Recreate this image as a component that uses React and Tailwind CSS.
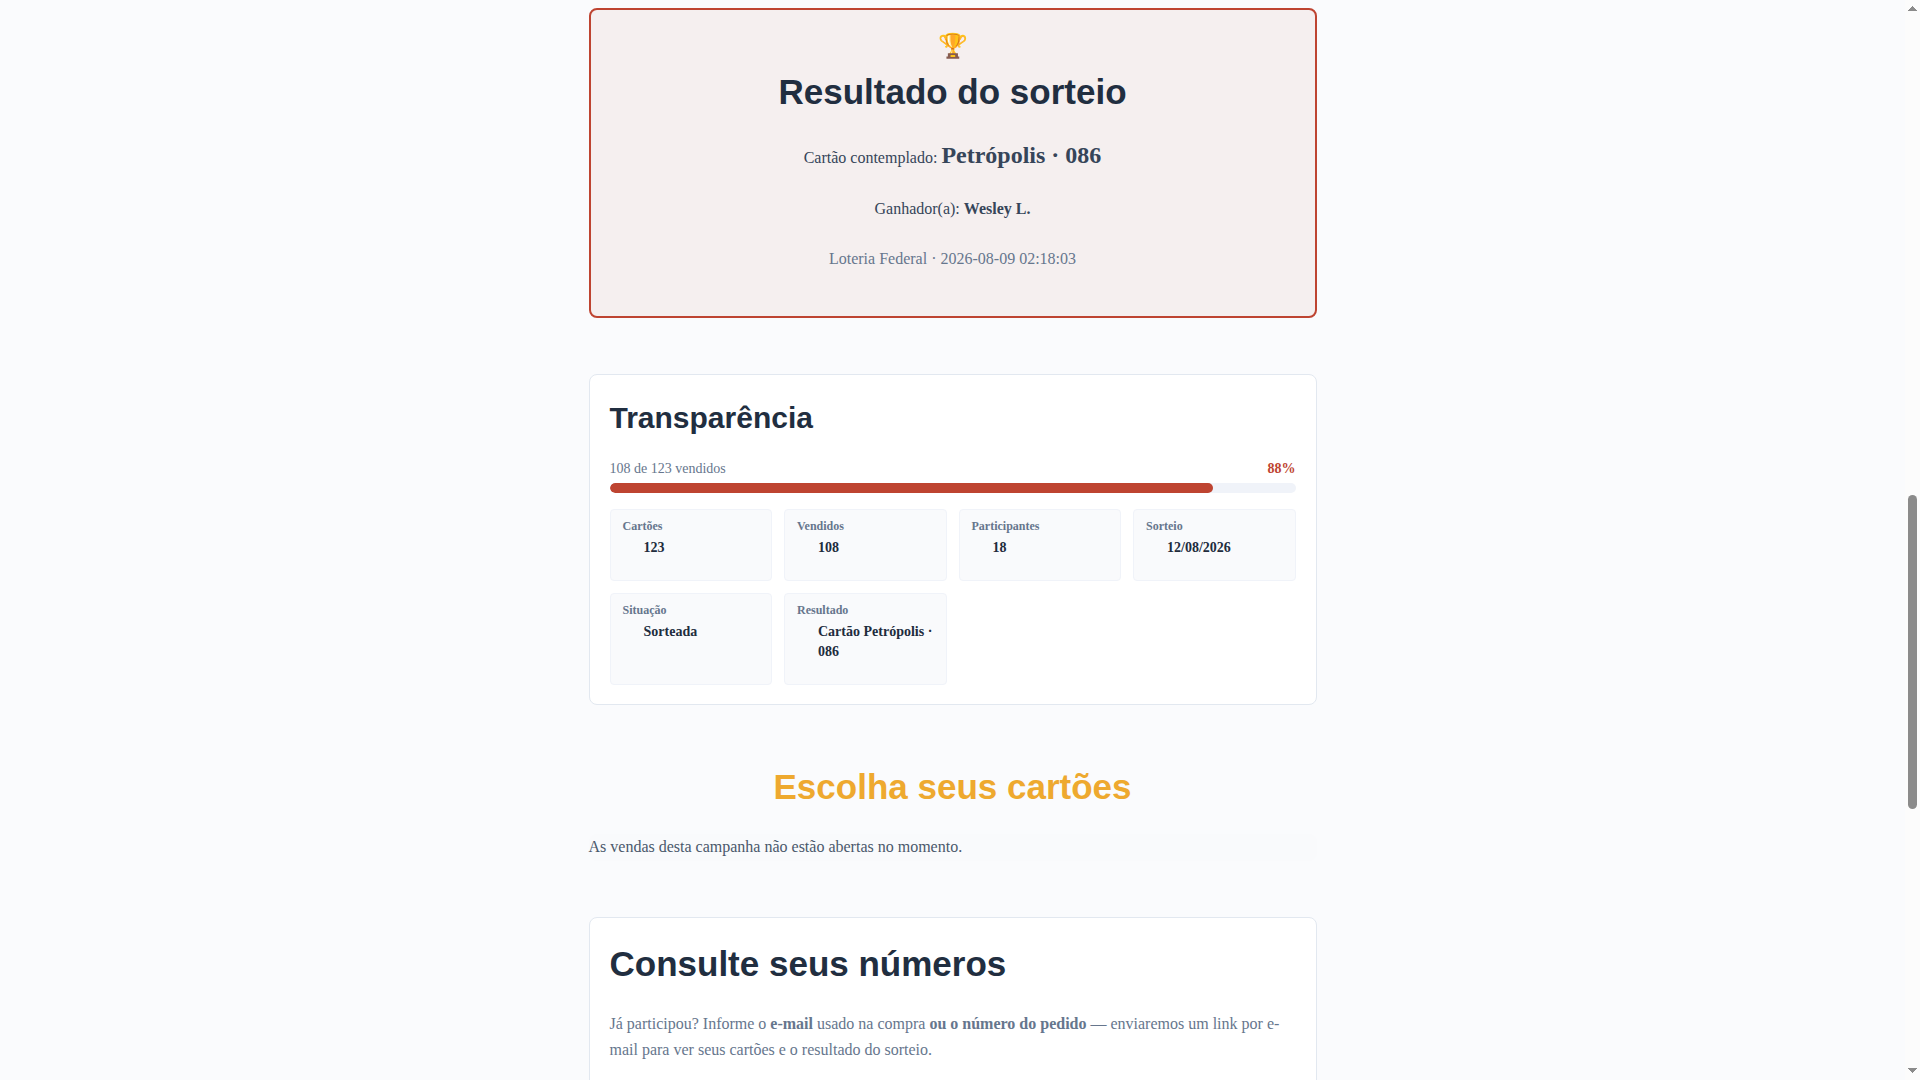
const stats = [
  { label: 'Cartões', value: '123' },
  { label: 'Vendidos', value: '108' },
  { label: 'Participantes', value: '18' },
  { label: 'Sorteio', value: '12/08/2026' },
  { label: 'Situação', value: 'Sorteada' },
  { label: 'Resultado', value: 'Cartão Petrópolis · 086' },
];

function Heading({ className, children }) {
  return (
    <h2 className={`font-['Liberation_Sans',Arial,sans-serif] font-bold ${className}`}>{children}</h2>
  );
}

function Result() {
  return (
    <section className="rounded-lg border-2 border-[#be4431] bg-[#f5efef] px-5 pt-5 pb-11 text-center text-[#364559]">
      <div className="text-2xl leading-8" aria-hidden="true">🏆</div>
      <Heading className="mt-1 text-[35px] leading-[52px] text-[#212e40]">Resultado do sorteio</Heading>
      <p className="mt-[23px] leading-[26px]">
        Cartão contemplado: <strong className="text-2xl leading-7">Petrópolis · 086</strong>
      </p>
      <p className="mt-[25px] leading-[26px]">
        Ganhador(a): <strong>Wesley L.</strong>
      </p>
      <p className="mt-6 leading-[26px] text-[#66768d]">Loteria Federal · 2026-08-09 02:18:03</p>
    </section>
  );
}

function Transparency() {
  const sold = 108;
  const total = 123;
  const percent = Math.round((sold / total) * 100);
  return (
    <section className="rounded-lg border border-[#e2e8f0] bg-white px-5 pt-5 pb-[19px]">
      <Heading className="text-3xl leading-[45px] text-[#212e40]">Transparência</Heading>
      <div className="mt-[18px] flex justify-between text-sm leading-[22px]">
        <span className="text-[#66768d]">{sold} de {total} vendidos</span>
        <strong className="text-[#be4431]">{percent}%</strong>
      </div>
      <div className="mt-[3px] h-2.5 overflow-hidden rounded-full bg-[#f0f3f9]">
        <div className="h-full rounded-full bg-[#be4431]" style={{ width: `${percent}%` }} />
      </div>
      <dl className="mt-4 grid grid-cols-2 gap-3 sm:grid-cols-4">
        {stats.map((s) => (
          <div key={s.label} className="rounded border border-[#f0f3f9] bg-[#f9fafc] px-3 pt-2 pb-[22px] font-bold">
            <dt className="text-xs leading-[17px] text-[#66768d]">{s.label}</dt>
            <dd className="mt-[3px] ml-[21px] text-sm leading-5 text-[#212c3d]">{s.value}</dd>
          </div>
        ))}
      </dl>
    </section>
  );
}

function Sales() {
  return (
    <section>
      <Heading className="text-center text-[35px] leading-[52px] text-[#eea92f]">Escolha seus cartões</Heading>
      <p className="mt-[21px] rounded-lg bg-[#f9fafc] pb-px leading-[26px] text-[#4a586b]">
        As vendas desta campanha não estão abertas no momento.
      </p>
    </section>
  );
}

function Lookup() {
  return (
    <section className="rounded-lg border border-[#e2e8f0] bg-white px-5 pt-5 pb-11">
      <Heading className="text-[35px] leading-[52px] text-[#212e40]">Consulte seus números</Heading>
      <p className="mt-[21px] leading-[26px] text-[#66768d]">
        Já participou? Informe o <strong>e-mail</strong> usado na compra{' '}
        <strong>ou o número do pedido</strong> — enviaremos um link por e-mail para ver seus cartões e o
        resultado do sorteio.
      </p>
    </section>
  );
}

function Scrollbar() {
  return (
    <div className="flex w-[15px] shrink-0 flex-col items-center bg-[#fcfcfc]" aria-hidden="true">
      <svg className="mt-1.5 h-[5px] w-[9px] shrink-0" viewBox="0 0 9 5" fill="#8b8b8b" shapeRendering="crispEdges">
        <path d="M4 0h1v1h1v1h1v1h1v1h1v1H0V4h1V3h1V2h1V1h1z" />
      </svg>
      <div className="flex w-full flex-1 flex-col items-center">
        <div className="flex-[484_1_0%]" />
        <div className="w-[9px] flex-[314_1_0%] rounded-full bg-[#8b8b8b]" />
        <div className="flex-[259_1_0%]" />
      </div>
      <svg className="mb-[7px] h-[5px] w-[9px] shrink-0" viewBox="0 0 9 5" fill="#8b8b8b" shapeRendering="crispEdges">
        <path d="M0 0h9v1H8v1H7v1H6v1H5v1H4V4H3V3H2V2H1V1H0z" />
      </svg>
    </div>
  );
}

export default function App() {
  return (
    <div className="flex h-screen overflow-hidden bg-[#fafbfd] font-['Liberation_Serif','Times_New_Roman',serif] text-base">
      <main className="min-w-0 flex-1 overflow-hidden px-4 pt-2">
        <div className="mx-auto flex max-w-[728px] flex-col gap-14">
          <Result />
          <Transparency />
          <Sales />
          <Lookup />
        </div>
      </main>
      <Scrollbar />
    </div>
  );
}
